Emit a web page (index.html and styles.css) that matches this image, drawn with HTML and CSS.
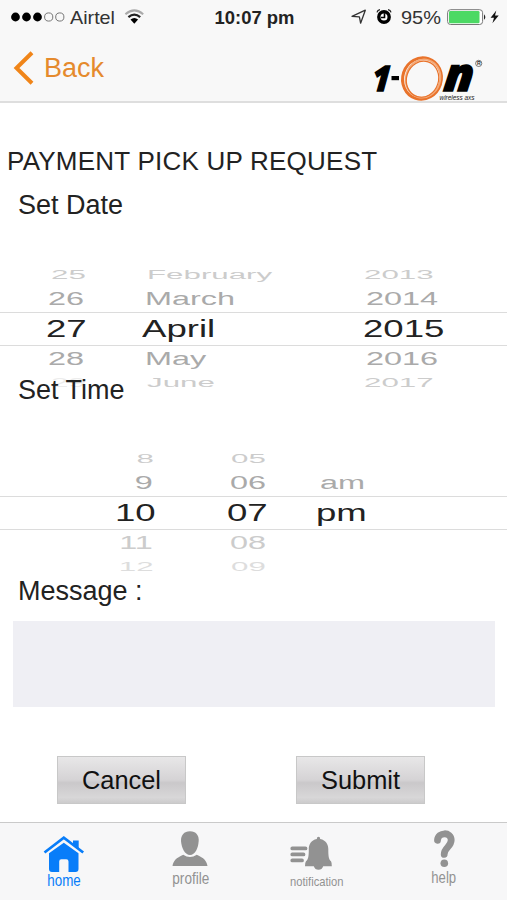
FILE: index.html
```html
<!DOCTYPE html>
<html lang="en">
<head>
<meta charset="utf-8">
<title>Payment pick up request</title>
<link rel="stylesheet" href="styles.css">
</head>
<body>
<div class="app">
  <header class="header">
    <div class="status">
      <svg class="status-left" width="160" height="34" viewBox="0 0 160 34">
        <g fill="#000"><circle cx="15.5" cy="17" r="4.4"/><circle cx="26.5" cy="17" r="4.4"/><circle cx="37.5" cy="17" r="4.4"/></g>
        <g fill="none" stroke="#777" stroke-width="1"><circle cx="48.7" cy="17" r="4.1"/><circle cx="59.8" cy="17" r="4.1"/></g>
        <text x="70" y="23.5" font-size="18.5" fill="#333" textLength="45" lengthAdjust="spacingAndGlyphs">Airtel</text>
        <g fill="none"><path d="M125.4 14.2Q134.3 6.6 143.2 14.2" stroke="#aaa" stroke-width="2"/><path d="M128.4 17.2Q134.3 12 140.2 17.2" stroke="#222" stroke-width="2.2"/></g>
        <path d="M130.5 19.6Q134.3 16.5 138.1 19.6L134.3 23.8Z" fill="#000"/>
      </svg>
      <svg class="status-time" width="90" height="34" viewBox="0 0 90 34">
        <text x="4.5" y="23.5" font-size="18.5" font-weight="bold" fill="#222" textLength="80" lengthAdjust="spacingAndGlyphs">10:07 pm</text>
      </svg>
      <svg class="status-right" width="157" height="34" viewBox="350 0 157 34">
        <path d="M352 16.4L365.3 10.2L360.6 23.2L359.4 16.9Z" fill="none" stroke="#333" stroke-width="1.3" stroke-linejoin="round"/>
        <circle cx="384" cy="17" r="5.2" fill="#fff" stroke="#000" stroke-width="3.4"/>
        <path d="M384.5 13.3V17.5H381" fill="none" stroke="#000" stroke-width="1.6"/>
        <path d="M377 12.3Q377.5 10 380 9.6M388 9.6Q390.5 10 391 12.3" fill="none" stroke="#222" stroke-width="1.3"/>
        <text x="401" y="23.7" font-size="19" fill="#333" textLength="40" lengthAdjust="spacingAndGlyphs">95%</text>
        <rect x="447.6" y="9.7" width="35" height="14.8" rx="3" fill="#fff" stroke="#777" stroke-width="1"/>
        <rect x="449" y="11" width="30.5" height="12.2" rx="1.3" fill="#4cd964"/>
        <path d="M484 14.2Q486.7 17 484 19.8Z" fill="#222"/>
        <path d="M496.3 10.5L490.6 17.7H494L492.4 23.3L498.7 15.6H495Z" fill="#111"/>
      </svg>
    </div>
    <div class="nav">
      <a class="back">
        <svg width="22" height="34" viewBox="0 0 22 34"><path d="M19 1.8L3.5 17L19 32.2" fill="none" stroke="#f08519" stroke-width="4"/></svg>
        <span>Back</span>
      </a>
      <svg class="logo" width="117" height="50" viewBox="370 54 117 50">
        <text class="logo-letter" transform="translate(371.5 90.5) skewX(-5) scale(.88 1)" font-size="35">1</text>
        <rect x="391.5" y="76" width="7.5" height="4.2" fill="#000"/>
        <g fill="none" stroke="#e9732b" transform="rotate(18 422 78.5)">
          <ellipse cx="422" cy="78.5" rx="19.3" ry="20.8" stroke-width="3"/>
          <ellipse cx="423" cy="78.2" rx="17.2" ry="19.2" stroke="#f4aa78" stroke-width="1.8"/>
          <ellipse cx="422.7" cy="79" rx="16" ry="18.2" stroke-width="1.2"/>
        </g>
        <text class="logo-letter" transform="translate(443 90.5) skewX(-6) scale(1.03 1)" font-size="46">n</text>
        <text x="439.5" y="99.5" font-size="8" font-style="italic" fill="#222" textLength="35" lengthAdjust="spacingAndGlyphs">wireless axs</text>
        <circle cx="478.7" cy="63.4" r="3.1" fill="none" stroke="#444" stroke-width=".7"/>
        <text x="476.9" y="65.3" font-size="5.2" font-weight="bold" fill="#333">R</text>
      </svg>
    </div>
  </header>

  <main class="content">
    <h1 class="title">PAYMENT PICK UP REQUEST</h1>
    <h2 class="label">Set Date</h2>
    <div class="wheel wheel-date">
      <div class="row far"><span class="day">25</span><span class="month">February</span><span class="year">2013</span></div>
      <div class="row near"><span class="day">26</span><span class="month">March</span><span class="year">2014</span></div>
      <div class="row current"><span class="day">27</span><span class="month">April</span><span class="year">2015</span></div>
      <div class="row near"><span class="day">28</span><span class="month">May</span><span class="year">2016</span></div>
      <div class="row far last"><span class="day">29</span><span class="month">June</span><span class="year">2017</span></div>
    </div>
    <h2 class="label label-time">Set Time</h2>
    <div class="wheel wheel-time">
      <div class="row far"><span class="hour">8</span><span class="minute">05</span></div>
      <div class="row near"><span class="hour">9</span><span class="minute">06</span><span class="half">am</span></div>
      <div class="row current"><span class="hour">10</span><span class="minute">07</span><span class="half">pm</span></div>
      <div class="row near faded"><span class="hour">11</span><span class="minute">08</span></div>
      <div class="row far last"><span class="hour">12</span><span class="minute">09</span></div>
    </div>
    <h2 class="label label-message">Message :</h2>
    <div class="message"></div>
    <div class="actions">
      <button class="button">Cancel</button>
      <button class="button">Submit</button>
    </div>
  </main>

  <nav class="tabs">
    <svg class="tab active" viewBox="0 823 127 77">
      <path d="M44.5 852.5L63.8 837.5L83.2 852.5" fill="none" stroke="#f7f7f8" stroke-width="5"/>
      <path d="M73 840.5H78.7V849L73 845Z"/>
      <path d="M44.5 852.5L63.8 837.7L83.2 852.5" fill="none" stroke="#087df9" stroke-width="2.7"/>
      <path d="M49 853.2L63.8 842.7L78.5 853.2V869Q78.5 872 75.5 872H68.5V861.5Q68.5 859.3 66.3 859.3H61.3Q59.2 859.3 59.2 861.5V872H52Q49 872 49 869Z"/>
      <text x="47.3" y="886" font-size="16.5" textLength="33.5" lengthAdjust="spacingAndGlyphs">home</text>
    </svg>
    <svg class="tab" viewBox="127 823 127 77">
      <path d="M190 831.2C196 831.2 199 835.3 198.7 841C198.3 848 195 855 190 855C185 855 181.5 848 181 841C180.8 835.3 184 831.2 190 831.2Z"/>
      <path d="M172.5 866C173.5 860.5 176 858 183.2 854.7Q190 859.5 196.8 854.7C204 858 206.5 860.5 207.5 866Z"/>
      <text x="172.3" y="883.5" font-size="16" textLength="37" lengthAdjust="spacingAndGlyphs">profile</text>
    </svg>
    <svg class="tab" viewBox="254 823 127 77">
      <path d="M292.3 848.4H305.5M292.3 854.4H303.5M292.3 860.4H302" fill="none" stroke="#929292" stroke-width="3.8" stroke-linecap="round"/>
      <path d="M316.8 839Q316.8 836.8 318.5 836.8Q320.2 836.8 320.2 839C326 840.2 328.3 844.5 328.3 849C328.3 856 328.6 859 331 861.3Q332 863 331.8 866.3H323.2Q322 869.8 318.5 869.8Q315 869.8 313.8 866.3H305Q304.8 863 306 861.3C308.5 859 308.8 856 308.8 849C308.8 844.5 311 840.2 316.8 839Z"/>
      <text x="290" y="886" font-size="13.5" textLength="53.5" lengthAdjust="spacingAndGlyphs">notification</text>
    </svg>
    <svg class="tab" viewBox="381 823 127 77">
      <path d="M437.5 840.3C438 831.8 451.2 831.5 451.2 840C451.2 847 444.1 847.5 444.2 854.4" fill="none" stroke="#929292" stroke-width="6.8" stroke-linecap="round"/>
      <circle cx="444.3" cy="863.2" r="3.8"/>
      <text x="431.3" y="883" font-size="16" textLength="24.8" lengthAdjust="spacingAndGlyphs">help</text>
    </svg>
  </nav>
</div>
</body>
</html>
```
FILE: styles.css
```css
* { box-sizing: border-box; }

body {
  margin: 0;
  background: #fff;
  font-family: "Liberation Sans", Arial, sans-serif;
  color: #222;
}

svg { display: block; }

.app {
  width: 507px;
  height: 900px;
  display: flex;
  flex-direction: column;
  overflow: hidden;
}

.header {
  height: 103px;
  background: #f8f8f8;
  border-bottom: 2px solid #dedede;
}

.status {
  height: 34px;
  display: flex;
}

.status-time { margin-left: 50px; }
.status-right { margin-left: 50px; }

.nav {
  display: flex;
  justify-content: space-between;
  align-items: flex-start;
  padding: 17px 20px 0 13px;
}

.back {
  display: flex;
  align-items: center;
  gap: 9px;
  font-size: 27px;
  line-height: 34px;
  color: #e58a2d;
}

.logo { margin-top: 3px; }

.logo-letter {
  font-family: "Open Sans", "Liberation Sans", sans-serif;
  font-weight: 800;
  font-style: italic;
  fill: #000;
  stroke: #000;
  stroke-width: 1.5;
}

.content {
  flex: 1;
  display: flex;
  flex-direction: column;
}

.title {
  margin: 43px 0 0 7px;
  font-size: 26px;
  font-weight: normal;
  line-height: 30px;
  letter-spacing: 0.23px;
  white-space: nowrap;
}

.label {
  margin: 14px 0 0 18px;
  font-size: 27px;
  font-weight: normal;
  line-height: 30px;
}

.wheel {
  font-size: 23px;
  margin-top: 42px;
}

.wheel-date { height: 113px; }

.wheel-time {
  height: 125px;
  margin-top: 41px;
}

.label-time {
  margin-top: 0;
  position: relative;
}

.label-message { margin-top: 5px; }

.row {
  display: grid;
  align-items: center;
  height: 24px;
  line-height: 24px;
  color: #ccc;
}

.row span {
  transform-origin: left center;
  transform: scale(1.36, 0.57);
  width: max-content;
}

.row.last {
  height: 20px;
  line-height: 20px;
}

.wheel-date .row { grid-template-columns: 96px 216px 1fr; padding-left: 51px; }
.wheel-date .year { margin-left: 1px; }
.wheel-date .last .day { color: #ececec; }

.wheel-time .row { grid-template-columns: 74px 77px 89px 1fr; padding-left: 80px; }
.wheel-time .last { color: #ddd; }
.minute { grid-column: 3; }

.row .hour {
  justify-self: end;
  transform-origin: right center;
}

.row.near { height: 26px; color: #aaa; }
.row.near span { transform: scale(1.41, 0.78); }
.wheel-date .row.near { padding-left: 48px; }
.wheel-date .near .month { margin-left: 1px; }
.wheel-date .near .year { margin-left: 6px; }
.wheel-time .row.near { padding-left: 79px; }
.wheel-time .near .half { margin-left: 1px; }
.row.near.faded { color: #ccc; }

.row.current {
  height: 34px;
  color: #222;
  border-top: 1px solid #dcdcdc;
  border-bottom: 1px solid #dcdcdc;
}

.row.current span { transform: scale(1.59, 1); }
.wheel-date .row.current { padding-left: 46px; }
.wheel-date .current .year { margin-left: 5px; }
.wheel-time .row.current { padding-left: 82px; }
.wheel-time .current .minute { margin-left: -6px; }
.wheel-time .current .half { margin-left: -6px; }

.message {
  width: 482px;
  height: 86px;
  margin: 15px 0 0 13px;
  background: #efeff4;
}

.actions {
  display: flex;
  gap: 110px;
  margin: 49px 0 0 57px;
}

.button {
  width: 129px;
  height: 48px;
  padding: 0;
  border: 1px solid #c8c8c8;
  border-radius: 0;
  font-family: inherit;
  font-size: 25.4px;
  color: #111;
  background: linear-gradient(#e8e7e8 0%, #d5d3d5 50%, #cac8ca 56%, #d8d7d8 88%, #cccbcc 100%);
}

.tabs {
  display: flex;
  height: 78px;
  border-top: 1px solid #cacaca;
  background: #f7f7f8;
}

.tab {
  width: 127px;
  height: 77px;
  flex: none;
  fill: #929292;
}

.tab.active { fill: #087df9; }
```
